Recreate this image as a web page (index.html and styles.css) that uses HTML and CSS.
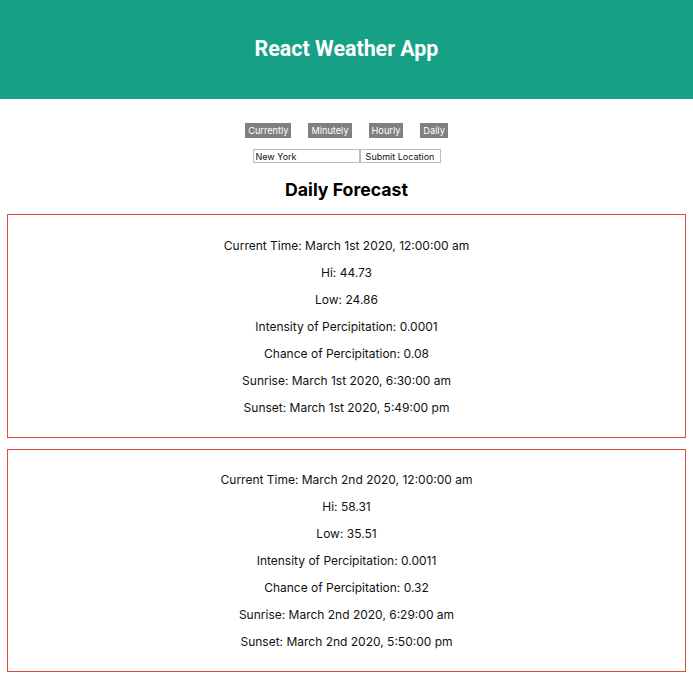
FILE: index.html
```html
<!DOCTYPE html>
<html>
<head>
<meta charset="utf-8">
<link rel="stylesheet" href="styles.css">
</head>
<body>
<header class="app-header"><h1 class="app-title">React Weather App</h1></header>
<nav class="tabs">
  <button class="tab">Currently</button>
  <button class="tab">Minutely</button>
  <button class="tab">Hourly</button>
  <button class="tab">Daily</button>
</nav>
<form class="location-form">
  <input class="location-input" type="text" value="New York">
  <button class="location-submit" type="button">Submit Location</button>
</form>
<h2 class="section-title">Daily Forecast</h2>
<div class="forecast-list">
  <div class="forecast-card">
    <p>Current Time: March 1st 2020, 12:00:00 am</p>
    <p>Hi: 44.73</p>
    <p>Low: 24.86</p>
    <p>Intensity of Percipitation: 0.0001</p>
    <p>Chance of Percipitation: 0.08</p>
    <p>Sunrise: March 1st 2020, 6:30:00 am</p>
    <p>Sunset: March 1st 2020, 5:49:00 pm</p>
  </div>
  <div class="forecast-card">
    <p>Current Time: March 2nd 2020, 12:00:00 am</p>
    <p>Hi: 58.31</p>
    <p>Low: 35.51</p>
    <p>Intensity of Percipitation: 0.0011</p>
    <p>Chance of Percipitation: 0.32</p>
    <p>Sunrise: March 2nd 2020, 6:29:00 am</p>
    <p>Sunset: March 2nd 2020, 5:50:00 pm</p>
  </div>
</div>
</body>
</html>
```
FILE: styles.css
```css
html, body { margin: 0; padding: 0; background: #fff; }
body { font-family: Inter, "Noto Sans", sans-serif; color: #111; }
.app-header {
  background: #16a085;
  height: 99px;
  display: flex;
  align-items: center;
  justify-content: center;
}
.app-title {
  margin: 0 0 2px;
  color: #fff;
  font-family: Roboto, sans-serif;
  font-weight: 700;
  font-size: 21.4px;
}
.tabs {
  display: flex;
  justify-content: center;
  gap: 17px;
  margin-top: 24px;
}
.tab {
  background: #808080;
  color: #fff;
  border: none;
  font-family: Inter, sans-serif;
  font-size: 9.2px;
  padding: 0 3px;
  height: 15px;
  line-height: 15px;
}
.location-form {
  display: flex;
  justify-content: center;
  margin-top: 11px;
}
.location-input {
  width: 107px;
  height: 14px;
  box-sizing: border-box;
  border: 1px solid #bbb;
  padding: 0 2px;
  font-family: Inter, sans-serif;
  font-size: 9px;
  color: #111;
  margin: 0;
}
.location-submit {
  width: 81px;
  height: 14px;
  box-sizing: border-box;
  border: 1px solid #bbb;
  background: #fff;
  padding: 0;
  font-family: Inter, sans-serif;
  font-size: 9px;
  color: #111;
  margin: 0;
}
.section-title {
  text-align: center;
  font-size: 17.7px;
  font-weight: 700;
  margin: 16px 0 13px;
  line-height: 22px;
  color: #000;
}
.forecast-list {
  display: flex;
  flex-direction: column;
  gap: 11px;
  margin: 0 7px;
}
.forecast-card {
  border: 1px solid #e04c3a;
  padding: 11px 0 10px;
  text-align: center;
}
.forecast-card + .forecast-card {
  padding: 10px 0 10px;
}
.forecast-card p {
  margin: 12px 0;
  font-size: 12px;
  line-height: 15px;
}
```
